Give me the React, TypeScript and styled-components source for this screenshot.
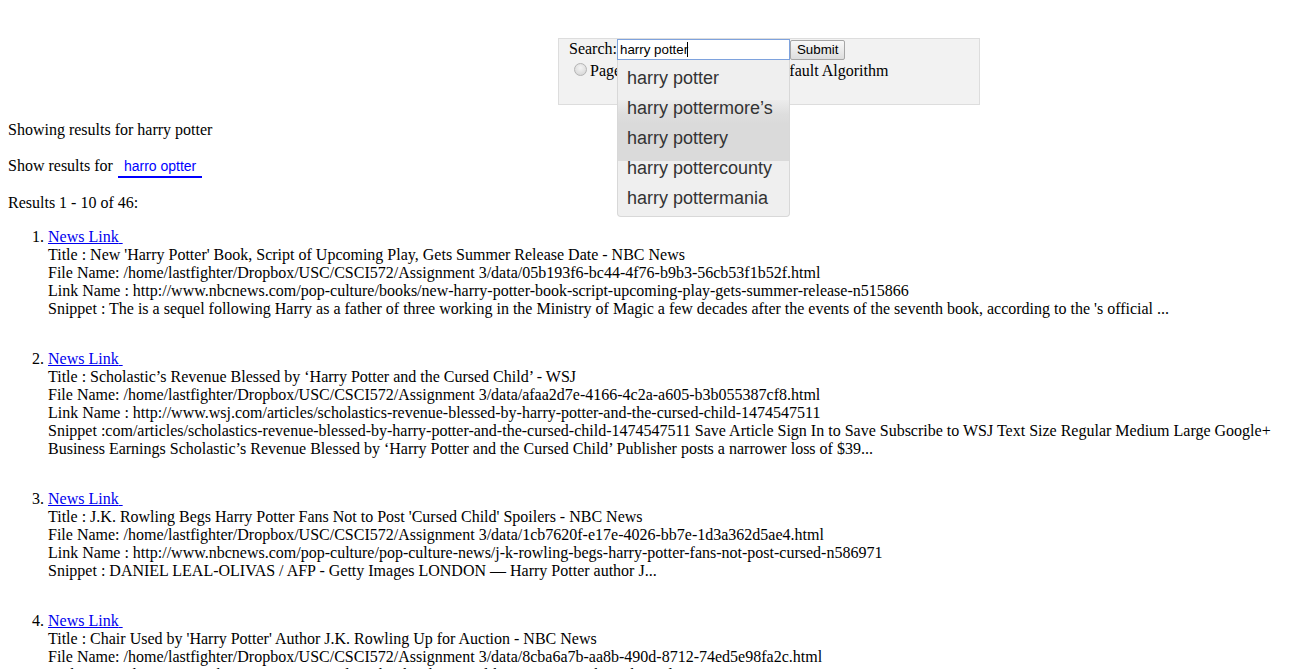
import React from "react";
import styled, { createGlobalStyle } from "styled-components";

const GlobalStyle = createGlobalStyle`
  html, body { background: #ffffff; }
  body {
    margin: 8px;
    font-family: "Liberation Serif", "Times New Roman", serif;
    font-size: 16px;
    color: #000000;
  }
`;

const SearchPanel = styled.form`
  box-sizing: border-box;
  width: 422px;
  margin: 30px 0 0 550px;
  padding: 0 10px 24px;
  background: #f2f2f2;
  border: 1px solid #dddddd;
`;

const Row = styled.div`
  white-space: nowrap;
`;

const InputWrap = styled.span`
  position: relative;
  display: inline-block;
`;

const QueryInput = styled.input`
  box-sizing: border-box;
  width: 173px;
  height: 21px;
  margin: 0;
  padding: 1px 2px;
  border: 1px solid #7ea2dd;
  outline: none;
  font-family: "Liberation Sans", Arial, sans-serif;
  font-size: 13.33px;
  color: #000000;
  background: #ffffff;
  vertical-align: baseline;
`;

const Caret = styled.span`
  position: absolute;
  left: 70px;
  top: 3px;
  width: 1px;
  height: 15px;
  background: #000000;
`;

const SubmitButton = styled.button`
  box-sizing: border-box;
  height: 20px;
  margin: 0;
  padding: 1px 6px;
  border: 1px solid #a6a6a6;
  border-radius: 2px;
  background: linear-gradient(#f8f8f8, #dddddd);
  font-family: "Liberation Sans", Arial, sans-serif;
  font-size: 13.33px;
  color: #000000;
`;

const Radio = styled.input<{ $gap?: number }>`
  appearance: none;
  -webkit-appearance: none;
  box-sizing: border-box;
  width: 13px;
  height: 13px;
  margin: 3px 3px 0 ${(p) => p.$gap ?? 5}px;
  border: 1px solid #b4b4b4;
  border-radius: 50%;
  background: radial-gradient(circle at 50% 35%, #f4f4f4 0%, #dcdcdc 70%, #cfcfcf 100%);
  vertical-align: baseline;
`;

const Suggestions = styled.ul`
  position: absolute;
  top: 100%;
  left: 0;
  box-sizing: border-box;
  width: 173px;
  margin: 0;
  padding: 3px 0 3px;
  list-style: none;
  background: #efefef;
  border: 1px solid #d8d8d8;
  border-top: none;
  border-radius: 0 0 4px 4px;
  z-index: 5;
`;

const Suggestion = styled.li<{ $active?: boolean }>`
  height: 30px;
  line-height: 30px;
  padding-left: 9px;
  font-family: "Liberation Sans", Arial, sans-serif;
  font-size: 18px;
  color: #333333;
  ${(p) =>
    p.$active
      ? `
    margin: -23px 0 -8px;
    padding-top: 23px;
    padding-bottom: 8px;
    background: linear-gradient(to bottom, #ececec 0px, #dedede 14px, #dadada 24px, #dadada 100%);
  `
      : ""}
`;

const Para = styled.p`
  margin: 16px 0;
`;

const Correction = styled.a`
  display: inline-block;
  margin-left: 1px;
  padding: 3px 6px 2px;
  border-bottom: 2px solid #0000ff;
  color: #0000ff;
  text-decoration: none;
  font-family: "Liberation Sans", Arial, sans-serif;
  font-size: 14px;
`;

const ResultList = styled.ol`
  margin: 16px 0;
  padding-left: 40px;
`;

const ResultItem = styled.li`
  margin-bottom: 32px;
`;

const ResultLink = styled.a`
  color: #0000ee;
  text-decoration: underline;
`;

const Field = styled.div``;

type Result = {
  title: string;
  file: string;
  link: string;
  snippet: string;
};

const results: Result[] = [
  {
    title:
      "Title : New 'Harry Potter' Book, Script of Upcoming Play, Gets Summer Release Date - NBC News",
    file: "File Name: /home/lastfighter/Dropbox/USC/CSCI572/Assignment 3/data/05b193f6-bc44-4f76-b9b3-56cb53f1b52f.html",
    link: "Link Name : http://www.nbcnews.com/pop-culture/books/new-harry-potter-book-script-upcoming-play-gets-summer-release-n515866",
    snippet:
      "Snippet : The is a sequel following Harry as a father of three working in the Ministry of Magic a few decades after the events of the seventh book, according to the 's official ...",
  },
  {
    title:
      "Title : Scholastic’s Revenue Blessed by ‘Harry Potter and the Cursed Child’ - WSJ",
    file: "File Name: /home/lastfighter/Dropbox/USC/CSCI572/Assignment 3/data/afaa2d7e-4166-4c2a-a605-b3b055387cf8.html",
    link: "Link Name : http://www.wsj.com/articles/scholastics-revenue-blessed-by-harry-potter-and-the-cursed-child-1474547511",
    snippet:
      "Snippet :com/articles/scholastics-revenue-blessed-by-harry-potter-and-the-cursed-child-1474547511 Save Article Sign In to Save Subscribe to WSJ Text Size Regular Medium Large Google+ Business Earnings Scholastic’s Revenue Blessed by ‘Harry Potter and the Cursed Child’ Publisher posts a narrower loss of $39...",
  },
  {
    title:
      "Title : J.K. Rowling Begs Harry Potter Fans Not to Post 'Cursed Child' Spoilers - NBC News",
    file: "File Name: /home/lastfighter/Dropbox/USC/CSCI572/Assignment 3/data/1cb7620f-e17e-4026-bb7e-1d3a362d5ae4.html",
    link: "Link Name : http://www.nbcnews.com/pop-culture/pop-culture-news/j-k-rowling-begs-harry-potter-fans-not-post-cursed-n586971",
    snippet:
      "Snippet : DANIEL LEAL-OLIVAS / AFP - Getty Images LONDON — Harry Potter author J...",
  },
  {
    title:
      "Title : Chair Used by 'Harry Potter' Author J.K. Rowling Up for Auction - NBC News",
    file: "File Name: /home/lastfighter/Dropbox/USC/CSCI572/Assignment 3/data/8cba6a7b-aa8b-490d-8712-74ed5e98fa2c.html",
    link: "Link Name : http://www.nbcnews.com/pop-culture/books/chair-used-harry-potter-author-j-k-rowling-up-auction-n532016",
    snippet:
      "Snippet : The chair J.K. Rowling sat on while writing the first two Harry Potter books is up for auction...",
  },
];

const suggestions = [
  "harry potter",
  "harry pottermore’s",
  "harry pottery",
  "harry pottercounty",
  "harry pottermania",
];

export default function App() {
  return (
    <>
      <GlobalStyle />
      <SearchPanel onSubmit={(e) => e.preventDefault()}>
        <Row>
          Search:
          <InputWrap>
            <QueryInput type="text" defaultValue="harry potter" />
            <Caret />
            <Suggestions>
              {suggestions.map((s, i) => (
                <Suggestion key={s} $active={i === 2}>
                  {s}
                </Suggestion>
              ))}
            </Suggestions>
          </InputWrap>
          <SubmitButton type="submit">Submit</SubmitButton>
        </Row>
        <Row>
          <Radio type="radio" name="algo" />
          Page Rank Algorithm <Radio type="radio" name="algo" $gap={22} />
          Default Algorithm
        </Row>
      </SearchPanel>
      <Para>Showing results for harry potter</Para>
      <Para>
        Show results for <Correction href="#">harro optter</Correction>
      </Para>
      <Para>Results 1 - 10 of 46:</Para>
      <ResultList>
        {results.map((r, i) => (
          <ResultItem key={i}>
            <ResultLink href="#">News Link{"\u00a0"}</ResultLink>
            <Field>{r.title}</Field>
            <Field>{r.file}</Field>
            <Field>{r.link}</Field>
            <Field>{r.snippet}</Field>
          </ResultItem>
        ))}
      </ResultList>
    </>
  );
}
